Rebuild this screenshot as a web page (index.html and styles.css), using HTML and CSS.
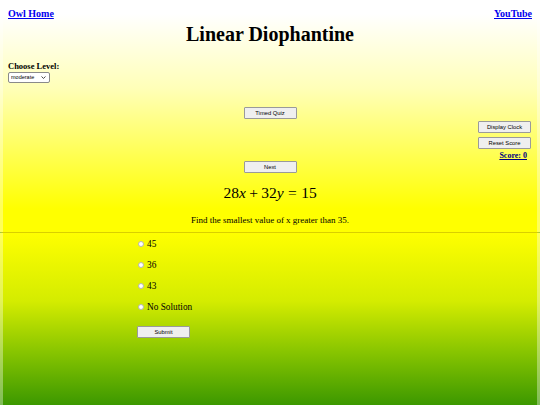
FILE: index.html
```html
<!DOCTYPE html>
<html lang="en">
<head>
<meta charset="utf-8">
<title>Linear Diophantine</title>
<link rel="stylesheet" href="styles.css">
</head>
<body>
<header class="top">
  <nav class="links">
    <a href="#" class="nav-link">Owl Home</a>
    <a href="#" class="nav-link">YouTube</a>
  </nav>
  <h1 class="title">Linear Diophantine</h1>
  <div class="level">
    <label class="level-label" for="level">Choose Level:</label>
    <span class="select-wrap">
      <select id="level" class="level-select">
        <option>easy</option>
        <option selected>moderate</option>
        <option>hard</option>
      </select>
      <svg class="chevron" width="5" height="3" viewBox="0 0 5 3"><path d="M0.5 0.5 L2.5 2.4 L4.5 0.5" fill="none" stroke="#333" stroke-width="0.9"/></svg>
    </span>
  </div>
  <div class="center-row timed-row"><button class="btn">Timed Quiz</button></div>
  <div class="side">
    <button class="btn">Display Clock</button>
    <button class="btn">Reset Score</button>
    <a href="#" class="score">Score: 0</a>
  </div>
  <div class="center-row"><button class="btn">Next</button></div>
  <div class="equation"><span class="num">28</span><span class="var">x</span><span class="bin">+</span><span class="num">32</span><span class="var">y</span><span class="rel">=</span><span class="num">15</span></div>
  <p class="question">Find the smallest value of x greater than 35.</p>
</header>
<main class="answers">
  <label class="option"><input type="radio" name="ans" class="radio"><span>45</span></label>
  <label class="option"><input type="radio" name="ans" class="radio"><span>36</span></label>
  <label class="option"><input type="radio" name="ans" class="radio"><span>43</span></label>
  <label class="option"><input type="radio" name="ans" class="radio"><span>No Solution</span></label>
  <button class="btn submit">Submit</button>
</main>
</body>
</html>
```

FILE: styles.css
```css
html, body {
  margin: 0;
  padding: 0;
}
body {
  font-family: "Liberation Serif", "Times New Roman", serif;
  color: #000;
  height: 405px;
  overflow: hidden;
  background: #5aa800;
}
.top {
  height: 232px;
  box-sizing: border-box;
  padding: 8px 5px 0 5px;
  border-left: 3px solid rgba(255,255,255,0.35);
  border-right: 3px solid rgba(255,255,255,0.35);
  background: linear-gradient(to bottom, #ffffff 6%, #ffffb8 38%, #ffff00 90%);
  background-origin: border-box;
}
.links {
  display: flex;
  justify-content: space-between;
  height: 12px;
  line-height: 12px;
}
.nav-link {
  font-size: 10px;
  font-weight: bold;
  color: #0000ee;
}
.title {
  margin: 2px 0 0;
  font-size: 20px;
  line-height: 24px;
  text-align: center;
}
.level {
  margin-top: 15px;
  display: flex;
  flex-direction: column;
  align-items: flex-start;
}
.level-label {
  font-size: 8.5px;
  font-weight: bold;
  line-height: 10px;
}
.select-wrap {
  position: relative;
  margin-top: 1px;
  display: inline-flex;
}
.level-select {
  appearance: none;
  -webkit-appearance: none;
  width: 42px;
  height: 11px;
  padding: 0 0 0 2px;
  font-family: "Liberation Sans", Arial, sans-serif;
  font-size: 5.5px;
  line-height: 9px;
  color: #000;
  border: 1px solid #8a8a8a;
  border-radius: 2px;
  background: #fff;
}
.chevron {
  position: absolute;
  right: 4px;
  top: 4px;
  pointer-events: none;
}
.center-row {
  display: flex;
  justify-content: center;
}
.timed-row {
  margin-top: 24px;
}
.btn {
  width: 53px;
  height: 12px;
  padding: 0;
  font-family: "Liberation Sans", Arial, sans-serif;
  font-size: 5.8px;
  color: #000;
  background: #efefef;
  border: 1px solid #9a9a9a;
  border-radius: 1px;
  line-height: 10px;
}
.side {
  margin: 2px 1px 0 0;
  display: flex;
  flex-direction: column;
  align-items: flex-end;
  gap: 4px;
}
.score {
  margin-right: 4px;
  margin-top: -2px;
  font-size: 8px;
  line-height: 10px;
  font-weight: bold;
  color: #000080;
}
.equation {
  margin-top: 10px;
  text-align: center;
  font-size: 15.5px;
  line-height: 20px;
}
.var {
  font-style: italic;
}
.bin {
  margin: 0 0.22em;
}
.rel {
  margin: 0 0.28em;
}
.question {
  margin: 11px 0 0;
  text-align: center;
  font-size: 9px;
  line-height: 12px;
}
.answers {
  height: 173px;
  box-sizing: border-box;
  border-top: 1px solid #d9cf00;
  border-left: 3px solid rgba(255,255,255,0.35);
  border-right: 3px solid rgba(255,255,255,0.35);
  background: linear-gradient(to bottom, #ffff00 0%, #d4ec00 40%, #86c400 70%, #3c9800 100%);
  background-origin: border-box;
  padding: 5px 0 0 134px;
  display: flex;
  flex-direction: column;
  align-items: flex-start;
  gap: 9px;
}
.option {
  display: flex;
  align-items: center;
  height: 12px;
  font-size: 9.3px;
  line-height: 12px;
}
.radio {
  appearance: none;
  -webkit-appearance: none;
  width: 6px;
  height: 6px;
  margin: 0 3px 0 1px;
  border: 1px solid #b5b5b5;
  border-radius: 50%;
  background: #fff;
  box-sizing: border-box;
}
.submit {
  margin-top: 4px;
}
```
